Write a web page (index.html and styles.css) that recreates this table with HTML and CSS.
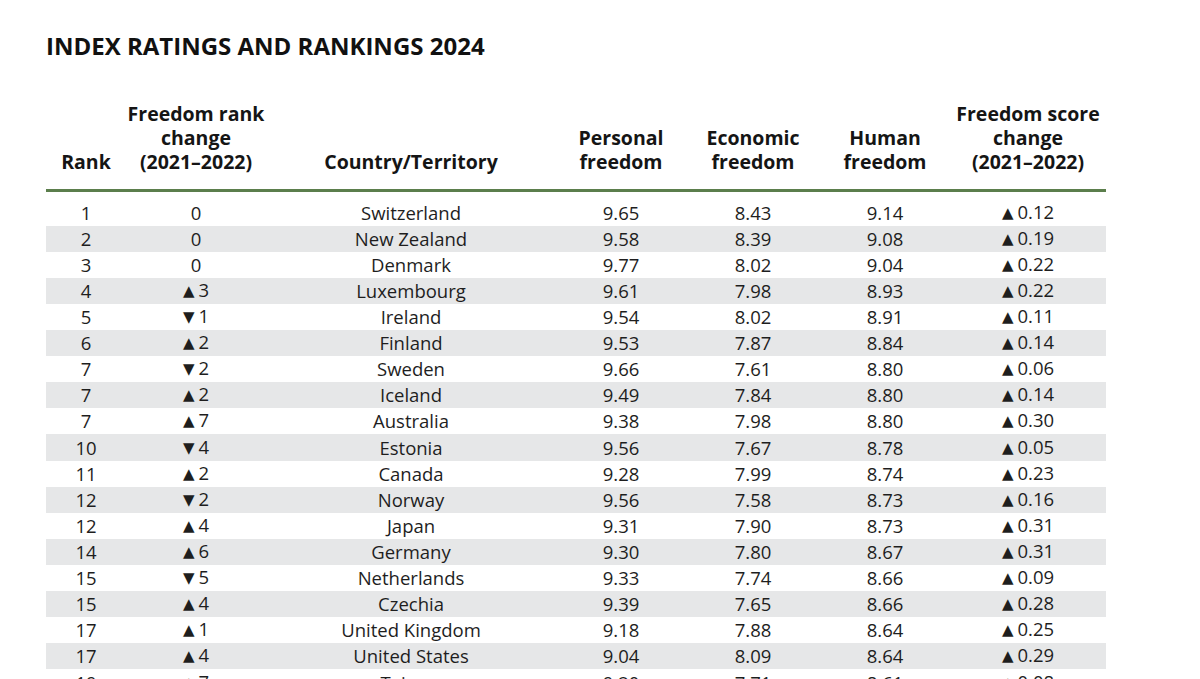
FILE: index.html
```html
<!DOCTYPE html>
<html lang="en">
<head>
<meta charset="utf-8">
<title>Index Ratings and Rankings 2024</title>
<link rel="stylesheet" href="styles.css">
</head>
<body>
<main class="page">
  <h1 class="title">INDEX RATINGS AND RANKINGS 2024</h1>
  <div class="table">
    <div class="row head">
      <div class="cell">Rank</div>
      <div class="cell">Freedom rank<br>change<br>(2021–2022)</div>
      <div class="cell">Country/Territory</div>
      <div class="cell">Personal<br>freedom</div>
      <div class="cell">Economic<br>freedom</div>
      <div class="cell">Human<br>freedom</div>
      <div class="cell">Freedom score<br>change<br>(2021–2022)</div>
    </div>
    <div class="rule"></div>
    <div class="body">
      <div class="row"><div class="cell">1</div><div class="cell">0</div><div class="cell">Switzerland</div><div class="cell">9.65</div><div class="cell">8.43</div><div class="cell">9.14</div><div class="cell"><span class="tri">▲</span>0.12</div></div>
      <div class="row"><div class="cell">2</div><div class="cell">0</div><div class="cell">New Zealand</div><div class="cell">9.58</div><div class="cell">8.39</div><div class="cell">9.08</div><div class="cell"><span class="tri">▲</span>0.19</div></div>
      <div class="row"><div class="cell">3</div><div class="cell">0</div><div class="cell">Denmark</div><div class="cell">9.77</div><div class="cell">8.02</div><div class="cell">9.04</div><div class="cell"><span class="tri">▲</span>0.22</div></div>
      <div class="row"><div class="cell">4</div><div class="cell"><span class="tri">▲</span>3</div><div class="cell">Luxembourg</div><div class="cell">9.61</div><div class="cell">7.98</div><div class="cell">8.93</div><div class="cell"><span class="tri">▲</span>0.22</div></div>
      <div class="row"><div class="cell">5</div><div class="cell"><span class="tri">▼</span>1</div><div class="cell">Ireland</div><div class="cell">9.54</div><div class="cell">8.02</div><div class="cell">8.91</div><div class="cell"><span class="tri">▲</span>0.11</div></div>
      <div class="row"><div class="cell">6</div><div class="cell"><span class="tri">▲</span>2</div><div class="cell">Finland</div><div class="cell">9.53</div><div class="cell">7.87</div><div class="cell">8.84</div><div class="cell"><span class="tri">▲</span>0.14</div></div>
      <div class="row"><div class="cell">7</div><div class="cell"><span class="tri">▼</span>2</div><div class="cell">Sweden</div><div class="cell">9.66</div><div class="cell">7.61</div><div class="cell">8.80</div><div class="cell"><span class="tri">▲</span>0.06</div></div>
      <div class="row"><div class="cell">7</div><div class="cell"><span class="tri">▲</span>2</div><div class="cell">Iceland</div><div class="cell">9.49</div><div class="cell">7.84</div><div class="cell">8.80</div><div class="cell"><span class="tri">▲</span>0.14</div></div>
      <div class="row"><div class="cell">7</div><div class="cell"><span class="tri">▲</span>7</div><div class="cell">Australia</div><div class="cell">9.38</div><div class="cell">7.98</div><div class="cell">8.80</div><div class="cell"><span class="tri">▲</span>0.30</div></div>
      <div class="row"><div class="cell">10</div><div class="cell"><span class="tri">▼</span>4</div><div class="cell">Estonia</div><div class="cell">9.56</div><div class="cell">7.67</div><div class="cell">8.78</div><div class="cell"><span class="tri">▲</span>0.05</div></div>
      <div class="row"><div class="cell">11</div><div class="cell"><span class="tri">▲</span>2</div><div class="cell">Canada</div><div class="cell">9.28</div><div class="cell">7.99</div><div class="cell">8.74</div><div class="cell"><span class="tri">▲</span>0.23</div></div>
      <div class="row"><div class="cell">12</div><div class="cell"><span class="tri">▼</span>2</div><div class="cell">Norway</div><div class="cell">9.56</div><div class="cell">7.58</div><div class="cell">8.73</div><div class="cell"><span class="tri">▲</span>0.16</div></div>
      <div class="row"><div class="cell">12</div><div class="cell"><span class="tri">▲</span>4</div><div class="cell">Japan</div><div class="cell">9.31</div><div class="cell">7.90</div><div class="cell">8.73</div><div class="cell"><span class="tri">▲</span>0.31</div></div>
      <div class="row"><div class="cell">14</div><div class="cell"><span class="tri">▲</span>6</div><div class="cell">Germany</div><div class="cell">9.30</div><div class="cell">7.80</div><div class="cell">8.67</div><div class="cell"><span class="tri">▲</span>0.31</div></div>
      <div class="row"><div class="cell">15</div><div class="cell"><span class="tri">▼</span>5</div><div class="cell">Netherlands</div><div class="cell">9.33</div><div class="cell">7.74</div><div class="cell">8.66</div><div class="cell"><span class="tri">▲</span>0.09</div></div>
      <div class="row"><div class="cell">15</div><div class="cell"><span class="tri">▲</span>4</div><div class="cell">Czechia</div><div class="cell">9.39</div><div class="cell">7.65</div><div class="cell">8.66</div><div class="cell"><span class="tri">▲</span>0.28</div></div>
      <div class="row"><div class="cell">17</div><div class="cell"><span class="tri">▲</span>1</div><div class="cell">United Kingdom</div><div class="cell">9.18</div><div class="cell">7.88</div><div class="cell">8.64</div><div class="cell"><span class="tri">▲</span>0.25</div></div>
      <div class="row"><div class="cell">17</div><div class="cell"><span class="tri">▲</span>4</div><div class="cell">United States</div><div class="cell">9.04</div><div class="cell">8.09</div><div class="cell">8.64</div><div class="cell"><span class="tri">▲</span>0.29</div></div>
      <div class="row"><div class="cell">19</div><div class="cell"><span class="tri">▲</span>7</div><div class="cell">Taiwan</div><div class="cell">9.20</div><div class="cell">7.71</div><div class="cell">8.61</div><div class="cell"><span class="tri">▲</span>0.08</div></div>
    </div>
  </div>
</main>
</body>
</html>
```
FILE: styles.css
```css
html, body {
  margin: 0;
  padding: 0;
  background: #ffffff;
}
body {
  font-family: "Open Sans", "Liberation Sans", sans-serif;
  color: #1e1e1e;
  overflow: hidden;
  height: 679px;
}
.page {
  padding: 32px 0 0 46px;
  width: 1060px;
}
.title {
  margin: 0;
  font-size: 24px;
  line-height: 28px;
  font-weight: 700;
  letter-spacing: 0;
  color: #111;
}
.table {
  margin-top: 42px;
}
.row {
  display: grid;
  grid-template-columns: 80px 140px 290px 130px 134px 130px 156px;
  align-items: center;
  text-align: center;
}
.head {
  align-items: end;
  font-weight: 700;
  font-size: 19.5px;
  line-height: 24px;
  letter-spacing: 0;
  padding-bottom: 15px;
  color: #151515;
}
.rule {
  height: 2.5px;
  background: #5b7e4c;
}
.body {
  padding-top: 8px;
}
.body .row {
  height: 26.12px;
  font-size: 18.5px;
  line-height: 22px;
}
.body .row:nth-child(even) {
  background: #e6e7e8;
}
.tri {
  font-family: "DejaVu Sans", sans-serif;
  font-size: 15px;
  margin-right: 4px;
  position: relative;
  top: -1px;
}
```
